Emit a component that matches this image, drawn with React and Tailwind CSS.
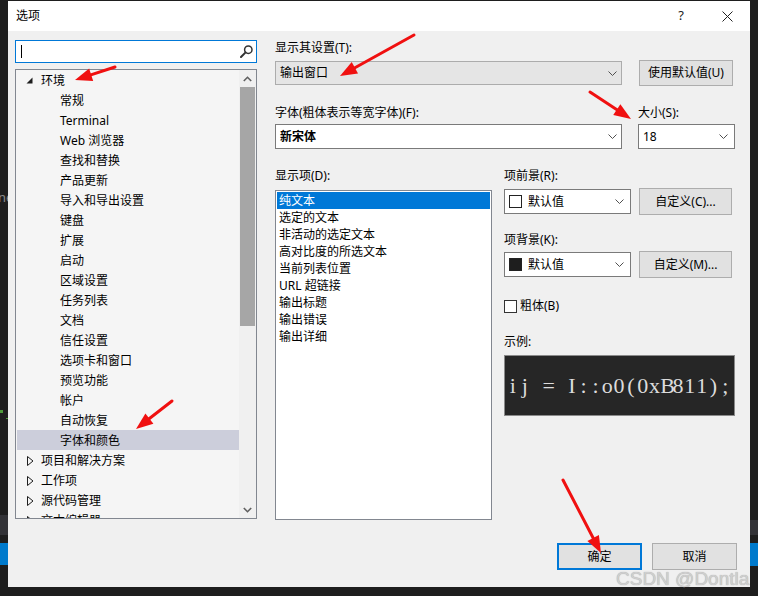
import React from "react";

const FONT = "font-['Noto_Sans','Noto_Sans_CJK_SC',sans-serif]";

const TREE = [
  { t: "环境", lvl: 0, mark: "exp" },
  { t: "常规", lvl: 1 },
  { t: "Terminal", lvl: 1 },
  { t: "Web 浏览器", lvl: 1 },
  { t: "查找和替换", lvl: 1 },
  { t: "产品更新", lvl: 1 },
  { t: "导入和导出设置", lvl: 1 },
  { t: "键盘", lvl: 1 },
  { t: "扩展", lvl: 1 },
  { t: "启动", lvl: 1 },
  { t: "区域设置", lvl: 1 },
  { t: "任务列表", lvl: 1 },
  { t: "文档", lvl: 1 },
  { t: "信任设置", lvl: 1 },
  { t: "选项卡和窗口", lvl: 1 },
  { t: "预览功能", lvl: 1 },
  { t: "帐户", lvl: 1 },
  { t: "自动恢复", lvl: 1 },
  { t: "字体和颜色", lvl: 1, sel: true },
  { t: "项目和解决方案", lvl: 0, mark: "col" },
  { t: "工作项", lvl: 0, mark: "col" },
  { t: "源代码管理", lvl: 0, mark: "col" },
  { t: "文本编辑器", lvl: 0, mark: "col" },
];

const ITEMS = [
  "纯文本",
  "选定的文本",
  "非活动的选定文本",
  "高对比度的所选文本",
  "当前列表位置",
  "URL 超链接",
  "输出标题",
  "输出错误",
  "输出详细",
];

const SAMPLE = "ij = I::o0(0xB811);";

function Chevron() {
  return (
    <svg width="9" height="5" viewBox="0 0 9 5" className="shrink-0">
      <polyline points="0.5,0.5 4.5,4.5 8.5,0.5" fill="none" stroke="#505050" strokeWidth="1" />
    </svg>
  );
}

function Btn({ children, w, h, primary }) {
  return (
    <div
      className={
        "flex items-center justify-center shrink-0 bg-[#e1e1e1] text-[12px] leading-[16px] text-black " +
        (primary ? "border-2 border-[#0078d7]" : "border border-[#adadad]")
      }
      style={{ width: w, height: h }}
    >
      {children}
    </div>
  );
}

function Arrow({ x0, y0, x1, y1 }) {
  const dx = x1 - x0;
  const dy = y1 - y0;
  const L = Math.hypot(dx, dy);
  const ux = dx / L;
  const uy = dy / L;
  const hl = 17;
  const hw = 6.5;
  const bx = x1 - ux * hl;
  const by = y1 - uy * hl;
  const pts = `${x1},${y1} ${bx - uy * hw},${by + ux * hw} ${bx + uy * hw},${by - ux * hw}`;
  return (
    <g>
      <line x1={x0} y1={y0} x2={bx + ux * 2} y2={by + uy * 2} stroke="#f01010" strokeWidth="3" strokeLinecap="round" />
      <polygon points={pts} fill="#f01010" />
    </g>
  );
}

export default function App() {
  return (
    <div className={"relative flex w-[758px] h-[596px] overflow-hidden bg-[#1e1e1e] " + FONT}>
      {/* left background strip */}
      <div className="w-[8px] h-full shrink-0 flex flex-col overflow-hidden">
        <div className="mt-[190px] h-[14px] text-[13px] leading-[14px] text-[#8c8c8c] whitespace-nowrap -ml-[2px]">ne</div>
        <div className="mt-[206px] w-[3px] h-[3px] bg-[#4e9a3a]" />
        <div className="mt-[5px] ml-[6px] w-[2px] h-[1px] bg-[#4e9a3a]" />
        <div className="mt-[96px] h-[20px] bg-[#333337]" />
        <div className="mt-[8px] h-[22px] bg-[#007acc]" />
      </div>

      {/* dialog */}
      <div className="w-[742px] shrink-0 flex flex-col mt-[1px]">
        {/* title bar */}
        <div className="h-[30px] bg-white flex items-center">
          <div className="pl-[8px] text-[12px] leading-[16px] text-black flex-1">选项</div>
          <div className="w-[46px] h-[30px] flex items-center justify-center text-[13px] text-[#222]">?</div>
          <div className="w-[46px] h-[30px] flex items-center justify-center">
            <svg width="11" height="11" viewBox="0 0 11 11">
              <path d="M0.5 0.5 L10.5 10.5 M10.5 0.5 L0.5 10.5" stroke="#222" strokeWidth="1" />
            </svg>
          </div>
        </div>

        {/* body */}
        <div className="h-[556px] bg-[#f0f0f0] flex flex-col pl-[7px] pr-[13px] pt-[9px] text-[12px] text-black">
          <div className="flex h-[480px]">
            {/* left column */}
            <div className="w-[242px] shrink-0 flex flex-col">
              <div className="h-[23px] border border-[#0078d7] bg-white flex items-center pl-[5px] pr-[3px]">
                <div className="w-[1px] h-[13px] bg-black" />
                <div className="flex-1" />
                <svg width="13" height="13" viewBox="0 0 13 13">
                  <circle cx="8.3" cy="4.7" r="3.7" fill="none" stroke="#333" strokeWidth="1.5" />
                  <line x1="5.6" y1="7.4" x2="1" y2="12" stroke="#333" strokeWidth="2" strokeLinecap="round" />
                </svg>
              </div>
              <div className="mt-[6px] h-[450px] border border-[#828790] bg-[#f5f5f5] flex overflow-hidden">
                <div className="flex-1 overflow-hidden pl-[1px]">
                  {TREE.map((it, i) => (
                    <div
                      key={i}
                      className={"h-[20px] flex items-center relative pt-[1px] " + (it.sel ? "bg-[#cccedb]" : "")}
                    >
                      {it.mark === "exp" && (
                        <svg width="7" height="7" viewBox="0 0 7 7" className="absolute left-[9px] top-[7px]">
                          <polygon points="6.5,0.5 6.5,6.5 0.5,6.5" fill="#1e1e1e" />
                        </svg>
                      )}
                      {it.mark === "col" && (
                        <svg width="7" height="10" viewBox="0 0 7 10" className="absolute left-[10px] top-[6px]">
                          <polygon points="0.5,0.5 6,5 0.5,9.5" fill="none" stroke="#1e1e1e" strokeWidth="1" />
                        </svg>
                      )}
                      <span
                        className={"text-[12px] leading-[16px] whitespace-nowrap " + (it.lvl === 0 ? "ml-[24px]" : "ml-[43px]")}
                      >
                        {it.t}
                      </span>
                    </div>
                  ))}
                </div>
                {/* scrollbar */}
                <div className="w-[17px] shrink-0 bg-[#f0f0f0] flex flex-col">
                  <div className="h-[17px] flex items-center justify-center">
                    <svg width="9" height="6" viewBox="0 0 9 6">
                      <polyline points="0.8,5 4.5,1.3 8.2,5" fill="none" stroke="#606060" strokeWidth="1.6" />
                    </svg>
                  </div>
                  <div className="h-[239px] mx-[1px] bg-[#a6a6a6]" />
                  <div className="flex-1" />
                  <div className="h-[17px] flex items-center justify-center">
                    <svg width="9" height="6" viewBox="0 0 9 6">
                      <polyline points="0.8,1 4.5,4.7 8.2,1" fill="none" stroke="#606060" strokeWidth="1.6" />
                    </svg>
                  </div>
                </div>
              </div>
            </div>

            {/* right column */}
            <div className="ml-[18px] w-[461px] flex flex-col">
              <div className="h-[16px] leading-[16px]">显示其设置(T):</div>
              <div className="mt-[4px] h-[26px] flex items-center">
                <div className="w-[347px] h-[24px] bg-[#e5e5e5] border border-[#acacac] flex items-center pl-[4px] pr-[4px]">
                  <span className="flex-1 leading-[16px]">输出窗口</span>
                  <Chevron />
                </div>
                <div className="ml-[17px]">
                  <Btn w={94} h={26}>使用默认值(U)</Btn>
                </div>
              </div>

              <div className="mt-[19px] flex">
                <div className="w-[347px] flex flex-col">
                  <div className="h-[16px] leading-[16px]">字体(粗体表示等宽字体)(F):</div>
                  <div className="mt-[3px] h-[25px] bg-white border border-[#7a7a7a] flex items-center pl-[4px] pr-[4px]">
                    <span className="flex-1 leading-[16px] font-bold">新宋体</span>
                    <Chevron />
                  </div>
                </div>
                <div className="ml-[16px] w-[97px] flex flex-col">
                  <div className="h-[16px] leading-[16px]">大小(S):</div>
                  <div className="mt-[3px] h-[25px] bg-white border border-[#7a7a7a] flex items-center pl-[4px] pr-[6px]">
                    <span className="flex-1 leading-[16px]">18</span>
                    <Chevron />
                  </div>
                </div>
              </div>

              <div className="mt-[19px] flex">
                <div className="w-[217px] flex flex-col">
                  <div className="h-[16px] leading-[16px]">显示项(D):</div>
                  <div className="mt-[6px] h-[330px] bg-white border border-[#828790] p-[1px]">
                    {ITEMS.map((t, i) => (
                      <div
                        key={i}
                        className={
                          "h-[17px] flex items-center pl-[2px] leading-[16px] whitespace-nowrap " +
                          (i === 0 ? "bg-[#0078d7] text-white" : "")
                        }
                      >
                        {t}
                      </div>
                    ))}
                  </div>
                </div>

                <div className="ml-[12px] w-[231px] flex flex-col">
                  <div className="h-[16px] leading-[16px]">项前景(R):</div>
                  <div className="mt-[4px] h-[27px] flex items-center">
                    <div className="w-[127px] h-[25px] bg-white border border-[#7a7a7a] flex items-center pl-[4px] pr-[6px]">
                      <div className="w-[13px] h-[13px] bg-white border border-[#222]" />
                      <span className="ml-[6px] flex-1 leading-[16px]">默认值</span>
                      <Chevron />
                    </div>
                    <div className="ml-[8px]">
                      <Btn w={93} h={27}>自定义(C)...</Btn>
                    </div>
                  </div>

                  <div className="mt-[17px] h-[16px] leading-[16px]">项背景(K):</div>
                  <div className="mt-[3px] h-[27px] flex items-center">
                    <div className="w-[127px] h-[25px] bg-white border border-[#7a7a7a] flex items-center pl-[4px] pr-[6px]">
                      <div className="w-[13px] h-[13px] bg-[#1e1e1e] border border-[#222]" />
                      <span className="ml-[6px] flex-1 leading-[16px]">默认值</span>
                      <Chevron />
                    </div>
                    <div className="ml-[8px]">
                      <Btn w={93} h={27}>自定义(M)...</Btn>
                    </div>
                  </div>

                  <div className="mt-[20px] h-[16px] flex items-center">
                    <div className="w-[13px] h-[13px] bg-white border border-[#333]" />
                    <span className="ml-[3px] leading-[16px]">粗体(B)</span>
                  </div>

                  <div className="mt-[20px] h-[16px] leading-[16px]">示例:</div>
                  <div className="mt-[5px] h-[61px] bg-[#262626] border border-[#8a8a8a] flex items-center pl-[2px] overflow-hidden">
                    <div className="flex font-['Liberation_Serif',serif] text-[22px] leading-[28px] text-[#dcdcdc] whitespace-pre">
                      {SAMPLE.split("").map((c, i) => (
                        <span key={i} className="inline-block w-[11.8px] text-center">
                          {c}
                        </span>
                      ))}
                    </div>
                  </div>
                </div>
              </div>
            </div>
          </div>

          {/* bottom buttons */}
          <div className="mt-[23px] flex justify-end gap-[10px]">
            <Btn w={85} h={27} primary>确定</Btn>
            <Btn w={85} h={27}>取消</Btn>
          </div>
        </div>
      </div>

      {/* right background strip */}
      <div className="w-[8px] h-full shrink-0 flex flex-col">
        <div className="mt-[520px] h-[15px] bg-[#333337]" />
        <div className="mt-[8px] h-[23px] bg-[#007acc]" />
      </div>

      {/* watermark */}
      <div className="absolute left-[616px] top-[568px] text-[19px] leading-[22px] text-[#cfcfcf] font-['Liberation_Sans',sans-serif] whitespace-nowrap [text-shadow:0_0_1px_rgba(0,0,0,0.35)]">
        CSDN @Dontla
      </div>

      {/* red annotation arrows */}
      <svg className="absolute inset-0 pointer-events-none" width="758" height="596" viewBox="0 0 758 596">
        <Arrow x0={115} y0={67} x1={75} y1={80} />
        <Arrow x0={414} y0={35} x1={340} y1={76} />
        <Arrow x0={590} y0={92} x1={631} y1={119} />
        <Arrow x0={172} y0={401} x1={136} y1={429} />
        <Arrow x0={563} y0={480} x1={601} y1={553} />
      </svg>
    </div>
  );
}
